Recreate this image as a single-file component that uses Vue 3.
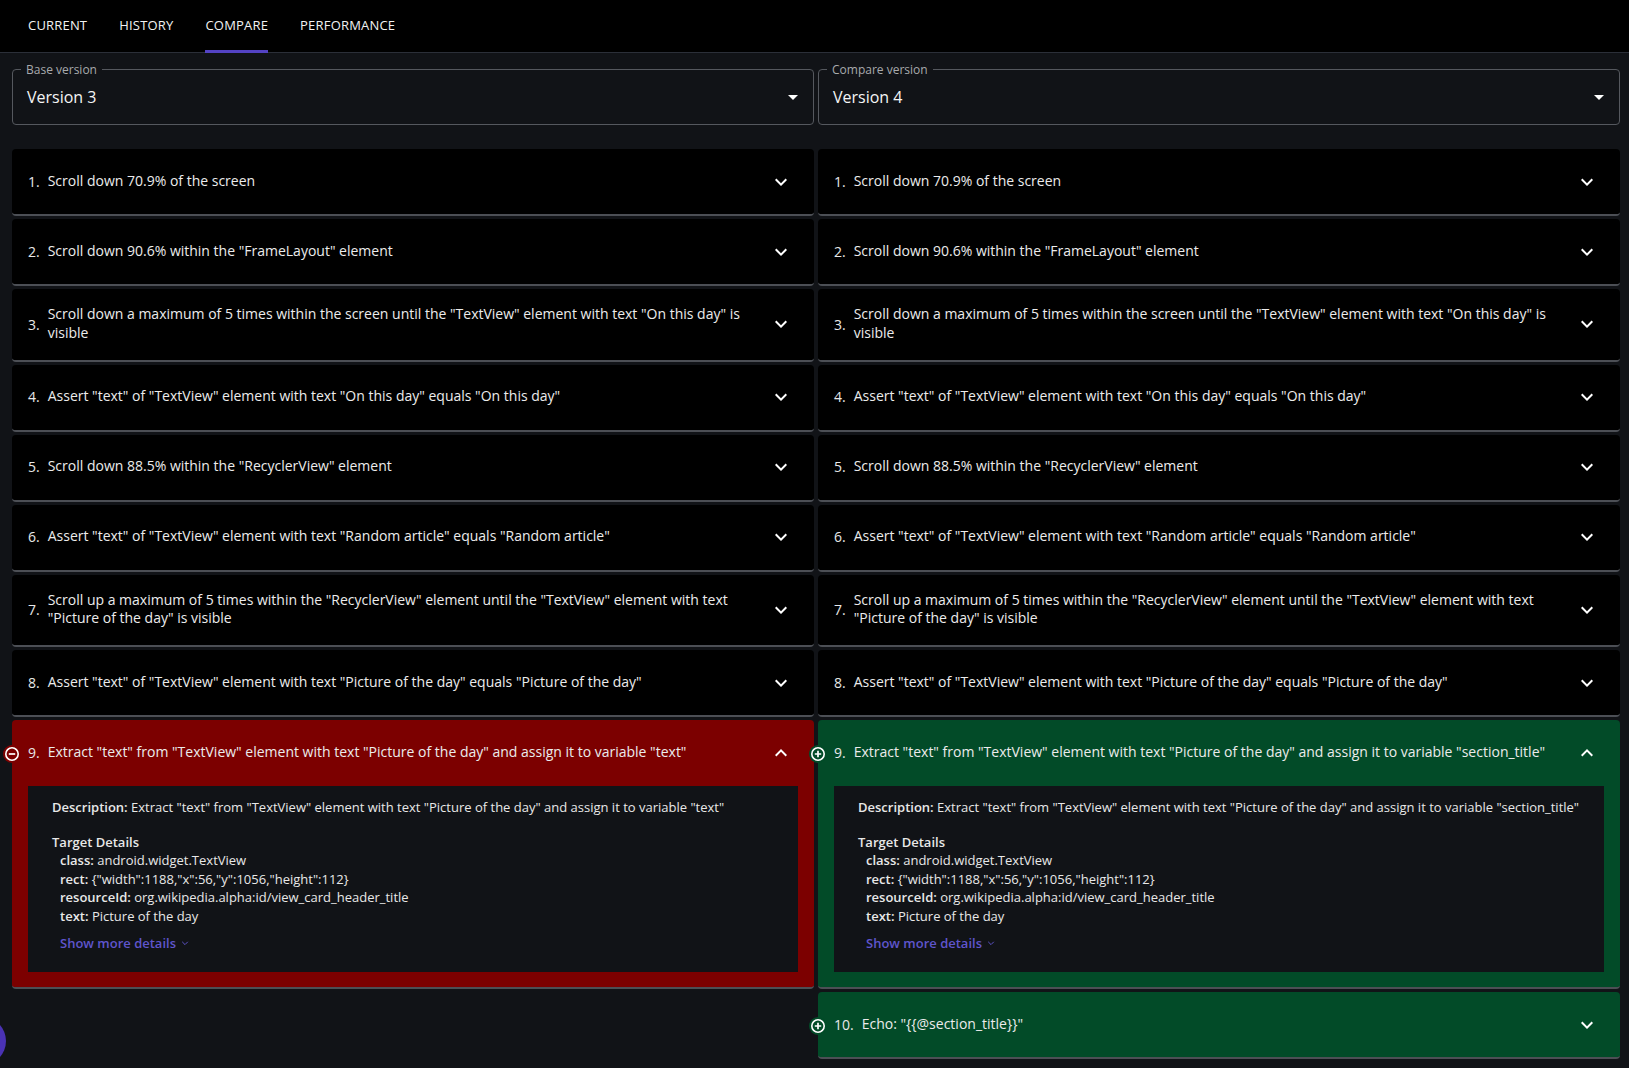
<script setup>
const shared = [
  { n: 1, text: 'Scroll down 70.9% of the screen' },
  { n: 2, text: 'Scroll down 90.6% within the "FrameLayout" element' },
  { n: 3, text: 'Scroll down a maximum of 5 times within the screen until the "TextView" element with text "On this day" is visible', tall: true },
  { n: 4, text: 'Assert "text" of "TextView" element with text "On this day" equals "On this day"' },
  { n: 5, text: 'Scroll down 88.5% within the "RecyclerView" element' },
  { n: 6, text: 'Assert "text" of "TextView" element with text "Random article" equals "Random article"' },
  { n: 7, text: 'Scroll up a maximum of 5 times within the "RecyclerView" element until the "TextView" element with text "Picture of the day" is visible', tall: true },
  { n: 8, text: 'Assert "text" of "TextView" element with text "Picture of the day" equals "Picture of the day"' }
]
const details = [
  ['class', 'android.widget.TextView'],
  ['rect', '{"width":1188,"x":56,"y":1056,"height":112}'],
  ['resourceId', 'org.wikipedia.alpha:id/view_card_header_title'],
  ['text', 'Picture of the day']
]
const columns = [
  {
    label: 'Base version', value: 'Version 3',
    steps: [...shared, {
      n: 9, kind: 'removed', open: true,
      text: 'Extract "text" from "TextView" element with text "Picture of the day" and assign it to variable "text"'
    }]
  },
  {
    label: 'Compare version', value: 'Version 4',
    steps: [...shared, {
      n: 9, kind: 'added', open: true,
      text: 'Extract "text" from "TextView" element with text "Picture of the day" and assign it to variable "section_title"'
    }, { n: 10, kind: 'added', text: 'Echo: "{{@section_title}}"' }]
  }
]
const tabs = ['Current', 'History', 'Compare', 'Performance']
</script>

<template>
  <div class="page">
    <nav class="tabs">
      <div v-for="t in tabs" :key="t" class="tab" :class="{ active: t === 'Compare' }">{{ t }}</div>
    </nav>
    <main class="columns">
      <section v-for="col in columns" :key="col.label" class="column">
        <fieldset class="select">
          <legend>{{ col.label }}</legend>
          <span class="value">{{ col.value }}</span>
          <svg class="caret" viewBox="0 0 24 24" width="24" height="24"><path d="M7 10l5 5 5-5z" fill="#fff" /></svg>
        </fieldset>
        <div class="steps">
          <article v-for="s in col.steps" :key="s.n" class="step" :class="s.kind">
            <span v-if="s.kind" class="badge">
              <svg viewBox="0 0 16 16" width="16" height="16">
                <circle cx="8" cy="8" r="6.2" fill="none" stroke="#fff" stroke-width="1.6" />
                <path :d="s.kind === 'added' ? 'M4.8 8h6.4M8 4.8v6.4' : 'M4.8 8h6.4'" stroke="#fff" stroke-width="1.7" fill="none" />
              </svg>
            </span>
            <header class="head" :class="{ tall: s.tall }">
              <span class="num">{{ s.n }}.</span>
              <span class="title">{{ s.text }}</span>
              <svg class="chev" viewBox="0 0 24 24" width="24" height="24">
                <path :d="s.open ? 'M7.41 15.41 12 10.83l4.59 4.58L18 14l-6-6-6 6z' : 'M7.41 8.59 12 13.17l4.59-4.58L18 10l-6 6-6-6z'" fill="#fff" />
              </svg>
            </header>
            <div v-if="s.open" class="body">
              <p class="desc"><b>Description:</b> {{ s.text }}</p>
              <h4>Target Details</h4>
              <div v-for="d in details" :key="d[0]" class="detail"><b>{{ d[0] }}:</b> {{ d[1] }}</div>
              <div class="more">
                Show more details
                <svg viewBox="0 0 10 10" width="8" height="8"><path d="M1.5 3.5 5 7l3.5-3.5" fill="none" stroke="#5f55cc" stroke-width="1.2" /></svg>
              </div>
            </div>
          </article>
        </div>
      </section>
    </main>
    <div class="fab"></div>
  </div>
</template>

<style>
html, body { margin: 0; background: #111317; }
</style>

<style scoped>
.page {
  position: relative;
  height: 1068px;
  overflow: hidden;
  background: #111317;
  color: #fff;
  font-family: "Open Sans", "Noto Sans", sans-serif;
  font-size: 14px;
}
.tabs {
  display: flex;
  height: 52px;
  padding-left: 12px;
  background: #000;
  border-bottom: 1px solid #2b2f38;
}
.tab {
  height: 52px;
  padding: 0 16px;
  box-sizing: border-box;
  line-height: 50px;
  font-size: 13px;
  font-weight: 500;
  letter-spacing: 0.19px;
  text-transform: uppercase;
  color: #f2f2f2;
}
.tab.active { position: relative; }
.tab.active::after {
  content: '';
  position: absolute;
  left: 16px;
  right: 16px;
  bottom: -1px;
  height: 3px;
  background: #5443c4;
}
.columns {
  display: grid;
  grid-template-columns: 802px 802px;
  gap: 4px;
  padding: 0 9px 0 12px;
}
.column { min-width: 0; }
.select {
  position: relative;
  box-sizing: border-box;
  height: 65px;
  margin: 7px 0 0;
  padding: 0 14px;
  border: 1px solid #55585e;
  border-radius: 4px;
  display: flex;
  align-items: center;
  justify-content: space-between;
}
.select legend {
  padding: 2px 5px 0;
  margin-left: -6px;
  font-size: 12px;
  line-height: 16px;
  color: #a8aaad;
}
.value {
  display: block;
  font-size: 16px;
  line-height: 24px;
  margin-top: -8px;
  color: #f5f5f5;
}
.caret { position: absolute; right: 8px; top: 7px; }
.steps {
  display: flex;
  flex-direction: column;
  gap: 3px;
  margin-top: 24px;
}
.step {
  position: relative;
  background: #000;
  border-bottom: 2px solid #4c4f55;
  border-radius: 4px;
}
.step.removed { background: #7c0000; }
.step.added { background: #024b28; }
.head {
  display: flex;
  align-items: center;
  box-sizing: border-box;
  min-height: 65px;
  padding: 0 16px;
  line-height: 18.5px;
  color: #ececec;
}
.head.tall { min-height: 70.5px; }
.num { flex: none; margin-right: 8px; margin-top: 1px; color: #e8e8e8; }
.title { flex: 1; padding-right: 24px; margin-top: -1px; }
.chev { flex: none; margin-right: 5px; }
.badge {
  position: absolute;
  left: -8px;
  top: 26px;
  width: 16px;
  height: 16px;
  line-height: 0;
  border-radius: 50%;
}
.removed .badge { background: #7c0000; box-shadow: 0 0 0 1px #7c0000; }
.added .badge { background: #024b28; box-shadow: 0 0 0 1px #024b28; }
.body {
  margin: 1px 16px 15px;
  padding: 12px 24px 20px;
  background: #111317;
  color: #e8e8e8;
  font-size: 13px;
  line-height: 18.57px;
}
.desc { margin: 0 0 16px; }
.body b, .body h4 { font-weight: 600; }
.body h4 { margin: 0; font-size: 13px; line-height: 18.57px; }
.detail { padding-left: 8px; }
.more {
  display: flex;
  align-items: center;
  gap: 5px;
  margin: 9px 0 0 8px;
  color: #5f55cc;
  font-weight: 600;
  font-size: 13px;
  line-height: 18px;
}
.fab {
  position: absolute;
  left: -42px;
  top: 1017px;
  width: 48px;
  height: 48px;
  border-radius: 50%;
  background: #4a32b4;
}
</style>
